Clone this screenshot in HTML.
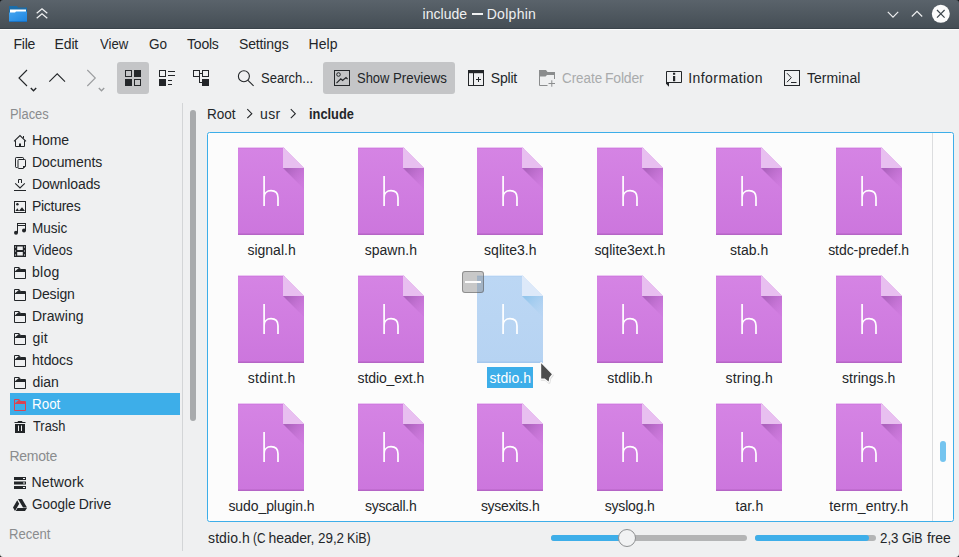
<!DOCTYPE html>
<html><head><meta charset="utf-8"><title>include — Dolphin</title>
<style>
html,body{margin:0;padding:0}
body{width:959px;height:557px;overflow:hidden;background:#eff0f1;position:relative;font-family:"Liberation Sans",sans-serif;font-size:14px}
.abs,.t,.fi,.pi,svg.a{position:absolute}
.t{transform-origin:0 0;white-space:nowrap;line-height:20px;height:20px;font-size:14px}
#title{left:0;top:0;width:959px;height:29px;background:linear-gradient(#5a636b 0,#454e55 96.5%,#3a434a 96.6%)}
#hl{left:0;top:29px;width:959px;height:1px;background:#fcfcfc}
.btn{background:#c4c5c7;border-radius:3px}
#view{left:207px;top:132px;width:745px;height:388px;background:#fcfcfc;border:1px solid #3daee9;border-radius:2.5px}
</style></head><body>
<svg width="0" height="0" style="position:absolute"><defs>
<linearGradient id="bn" x1="0" y1="0" x2="0" y2="1"><stop offset="0" stop-color="#d584e4"/><stop offset="1" stop-color="#cc76dd"/></linearGradient>
<linearGradient id="bs" x1="0" y1="0" x2="0" y2="1"><stop offset="0" stop-color="#bcd7f4"/><stop offset="1" stop-color="#b6d3f2"/></linearGradient>
<linearGradient id="hn" x1="0.25" y1="0" x2="1" y2="0.75"><stop offset="0" stop-color="#ad63be"/><stop offset="1" stop-color="#c873d8" stop-opacity="0.3"/></linearGradient>
<linearGradient id="hs" x1="0.25" y1="0" x2="1" y2="0.75"><stop offset="0" stop-color="#94c6ec"/><stop offset="1" stop-color="#b0d2f2" stop-opacity="0.3"/></linearGradient>
</defs></svg>

<div id="title" class="abs"></div>
<div id="hl" class="abs"></div>
<!-- window corners -->
<svg class="a" style="left:0;top:0" width="3" height="3"><path d="M0 0H3A3 3 0 0 0 0 3Z" fill="#111"/></svg>
<svg class="a" style="left:956px;top:0" width="3" height="3"><path d="M3 0H0A3 3 0 0 1 3 3Z" fill="#111"/></svg>
<svg class="a" style="left:0;top:554px" width="3" height="3"><path d="M0 3H3A3 3 0 0 1 0 0Z" fill="#222"/></svg>
<svg class="a" style="left:956px;top:554px" width="3" height="3"><path d="M3 3H0A3 3 0 0 0 3 0Z" fill="#222"/></svg>

<!-- app icon -->
<svg class="a" style="left:9px;top:6px" width="18" height="16" viewBox="0 0 18 16">
<defs><linearGradient id="fg" x1="0" y1="0" x2="1" y2="1"><stop offset="0" stop-color="#46a5f0"/><stop offset="1" stop-color="#1c84e0"/></linearGradient></defs>
<path d="M0 0H8L9 1.5H18V8H0Z" fill="#1b6ca8"/>
<path d="M1 3.5H17V8H1Z" fill="#fff"/>
<path d="M0 6.5H6L7 5.5H18V16H0Z" fill="url(#fg)"/>
<rect x="0" y="15.3" width="18" height="0.7" fill="#1667b5"/>
</svg>
<div class="abs" style="left:472.3px;top:13.3px;width:10.8px;height:1.4px;background:#eff0f1"></div>
<!-- keep above -->
<svg class="a" style="left:35px;top:7px" width="14" height="14" viewBox="0 0 14 14"><path d="M1.7 6.2L7 1.8L12.3 6.2M1.7 11.2L7 6.8L12.3 11.2" fill="none" stroke="#eff0f1" stroke-width="1.3"/></svg>
<!-- min max close -->
<svg class="a" style="left:885px;top:6px" width="16" height="16" viewBox="0 0 16 16"><path d="M2.8 5.9L8 11.1L13.2 5.9" fill="none" stroke="#eff0f1" stroke-width="1.2"/></svg>
<svg class="a" style="left:909px;top:6px" width="16" height="16" viewBox="0 0 16 16"><path d="M2.8 10.5L8 5.3L13.2 10.5" fill="none" stroke="#eff0f1" stroke-width="1.2"/></svg>
<svg class="a" style="left:931px;top:4px" width="20" height="20" viewBox="0 0 20 20"><circle cx="9.8" cy="9.8" r="9" fill="#fcfcfc"/><path d="M6 6L13.6 13.6M13.6 6L6 13.6" fill="none" stroke="#3b444b" stroke-width="1.2"/></svg>

<!-- toolbar -->
<div class="abs btn" style="left:117px;top:62px;width:32px;height:32px"></div>
<div class="abs btn" style="left:323px;top:62px;width:132px;height:32px"></div>
<svg class="a" style="left:0;top:60px" width="959" height="40" viewBox="0 60 959 40">
<g fill="none" stroke="#232629" stroke-width="1.1">
<path d="M27 70L19 78L27 86"/>
<path d="M30.8 88L33.5 90.7L36.2 88" stroke-width="1.4"/>
<path d="M49.3 81.7L57.2 73.9L65 81.7"/>
<g stroke="#9a9c9e"><path d="M87.3 70L95.3 78L87.3 86"/><path d="M98.8 88L101.5 90.7L104.2 88" stroke-width="1.4"/></g>
</g>
<!-- icons view -->
<g fill="#232629">
<path d="M125 70h7v7h-7z M126 71v5h5v-5z" fill-rule="evenodd"/>
<rect x="134" y="70" width="7" height="7"/>
<rect x="125" y="79" width="7" height="7"/>
<path d="M134 79h7v7h-7z M135 80v5h5v-5z" fill-rule="evenodd"/>
<!-- compact -->
<path d="M159 70h7v7h-7z M160 71v5h5v-5z" fill-rule="evenodd"/>
<rect x="159" y="79" width="7" height="7"/>
<rect x="168" y="71" width="7" height="1"/><rect x="168" y="75" width="7" height="1"/>
<rect x="168" y="80" width="4" height="1"/><rect x="168" y="84" width="4" height="1"/>
<!-- tree -->
<path d="M193 70h7v7h-7z M194 71v5h5v-5z" fill-rule="evenodd"/>
<path d="M202 70h7v7h-7z M203 71v5h5v-5z" fill-rule="evenodd"/>
<rect x="202" y="79" width="7" height="7"/>
<path d="M200 73h2v1h-2z M199 77h1v6h-1z M199 82h3v1h-3z"/>
</g>
<!-- search -->
<g fill="none" stroke="#232629" stroke-width="1.1"><circle cx="243.9" cy="76.2" r="5.5"/><path d="M248 80.3L253.6 85.8"/></g>
<!-- show previews -->
<g fill="none" stroke="#232629"><rect x="334.5" y="70.5" width="15" height="15"/><circle cx="338.5" cy="74.5" r="1.8"/><path d="M336.5 83.2L340.8 78.8L342.6 80.4L346 77.6L347.6 79.2" stroke-width="1.2"/></g>
<!-- split -->
<g fill="none" stroke="#232629"><rect x="468.5" y="70.5" width="15" height="15"/><path d="M473.5 73V85.5"/><path d="M476 79.5H481M478.5 77V82"/></g>
<rect x="468" y="70" width="16" height="3.2" fill="#232629"/>
<!-- create folder -->
<g fill="none" stroke="#8a8c8d"><path d="M547.5 85.5H539.5V72M554.5 79V72"/><path d="M548.5 83.5H555M551.8 80.3V86.7"/></g>
<path d="M539 70H546L547.5 72H555V75H547L545.5 76.5H539Z" fill="#8a8c8d"/>
<!-- information -->
<g fill="none" stroke="#232629"><path d="M666.5 82.5V71.5H681.5V82.5H669"/></g>
<path d="M666 82H669V86.7L666 83.7Z" fill="#232629"/>
<path d="M673 72.8H675.2V74.8H673Z M673 76H675.2V81.2H673Z" fill="#232629"/>
<!-- terminal -->
<g fill="none" stroke="#232629"><rect x="784.5" y="70.5" width="15" height="15"/><path d="M787 73.2L791.3 77.7L787 82.2"/><path d="M791 82.5H796.5"/></g>
</svg>

<!-- places -->
<div class="abs" style="left:10px;top:393px;width:170px;height:22px;background:#3daee9"></div>
<svg class="pi" style="left:12px;top:133.0px;color:#232629" width="16" height="16" viewBox="0 0 16 16"><path d="M2 8.3L8 2.5L14 8.3" fill="none" stroke="currentColor" stroke-width="1.1"/><path d="M3.5 7.3V13.5H12.5V7.3" fill="none" stroke="currentColor"/><rect x="7" y="10.5" width="2" height="3" fill="currentColor"/><path d="M11.5 3V5.2" fill="none" stroke="currentColor"/></svg>
<svg class="pi" style="left:12px;top:155.0px;color:#232629" width="16" height="16" viewBox="0 0 16 16"><path d="M5.5 12.5H4.2C3.8 12.5 3.5 12.2 3.5 11.8V3.2C3.5 2.8 3.8 2.5 4.2 2.5H10.8C11.2 2.5 11.5 2.8 11.5 3.2V4.4" fill="none" stroke="currentColor"/><path d="M6.7 4.5H12.8C13.2 4.5 13.5 4.8 13.5 5.2V11L11 13.5H6.7C6.3 13.5 6 13.2 6 12.8V5.2C6 4.8 6.3 4.5 6.7 4.5Z" fill="none" stroke="currentColor"/><path d="M11 14V11H14Z" fill="currentColor"/></svg>
<svg class="pi" style="left:12px;top:177.0px;color:#232629" width="16" height="16" viewBox="0 0 16 16"><path d="M6.5 6V2.5H9.5V6" fill="none" stroke="currentColor"/><path d="M3.2 6.3L8 11L12.8 6.3" fill="none" stroke="currentColor" stroke-width="1.1"/><path d="M2 13.5H14" fill="none" stroke="currentColor"/></svg>
<svg class="pi" style="left:12px;top:199.0px;color:#232629" width="16" height="16" viewBox="0 0 16 16"><rect x="2.5" y="2.5" width="11" height="11" fill="none" stroke="currentColor"/><circle cx="5.4" cy="5.2" r="1.25" fill="currentColor"/><path d="M3.4 12L5.3 9.3L7 11.7L10 8.3L13 12Z" fill="currentColor"/></svg>
<svg class="pi" style="left:12px;top:221.0px;color:#232629" width="16" height="16" viewBox="0 0 16 16"><path d="M5 2H14V3H5Z M5 4H14V5H5Z M5 2H6V12H5Z M13 2H14V10H13Z" fill="currentColor"/><circle cx="4" cy="11.8" r="2" fill="currentColor"/><circle cx="12" cy="9.6" r="2" fill="currentColor"/></svg>
<svg class="pi" style="left:12px;top:243.0px;color:#232629" width="16" height="16" viewBox="0 0 16 16"><rect x="2" y="2" width="12" height="12" fill="currentColor"/><path d="M5.2 3.5H10.8V7H5.2Z M5.2 9H10.8V12.5H5.2Z" fill="#eff0f1"/><path d="M3 3.5H4V4.5H3Z M3 7.5H4V8.5H3Z M3 11.5H4V12.5H3Z M12 3.5H13V4.5H12Z M12 7.5H13V8.5H12Z M12 11.5H13V12.5H12Z" fill="#eff0f1"/></svg>
<svg class="pi" style="left:12px;top:265.0px;color:#232629" width="16" height="16" viewBox="0 0 16 16"><path d="M2.5 13.5V2.5H7.2L8.5 4.5H13.5V13.5Z" fill="none" stroke="currentColor"/><path d="M3 7V6.2L6.8 3H7.4L8.4 4.5H13V7Z" fill="currentColor"/></svg>
<svg class="pi" style="left:12px;top:287.0px;color:#232629" width="16" height="16" viewBox="0 0 16 16"><path d="M2.5 13.5V2.5H7.2L8.5 4.5H13.5V13.5Z" fill="none" stroke="currentColor"/><path d="M3 7V6.2L6.8 3H7.4L8.4 4.5H13V7Z" fill="currentColor"/></svg>
<svg class="pi" style="left:12px;top:309.0px;color:#232629" width="16" height="16" viewBox="0 0 16 16"><path d="M2.5 13.5V2.5H7.2L8.5 4.5H13.5V13.5Z" fill="none" stroke="currentColor"/><path d="M3 7V6.2L6.8 3H7.4L8.4 4.5H13V7Z" fill="currentColor"/></svg>
<svg class="pi" style="left:12px;top:331.0px;color:#232629" width="16" height="16" viewBox="0 0 16 16"><path d="M2.5 13.5V2.5H7.2L8.5 4.5H13.5V13.5Z" fill="none" stroke="currentColor"/><path d="M3 7V6.2L6.8 3H7.4L8.4 4.5H13V7Z" fill="currentColor"/></svg>
<svg class="pi" style="left:12px;top:353.0px;color:#232629" width="16" height="16" viewBox="0 0 16 16"><path d="M2.5 13.5V2.5H7.2L8.5 4.5H13.5V13.5Z" fill="none" stroke="currentColor"/><path d="M3 7V6.2L6.8 3H7.4L8.4 4.5H13V7Z" fill="currentColor"/></svg>
<svg class="pi" style="left:12px;top:375.0px;color:#232629" width="16" height="16" viewBox="0 0 16 16"><path d="M2.5 13.5V2.5H7.2L8.5 4.5H13.5V13.5Z" fill="none" stroke="currentColor"/><path d="M3 7V6.2L6.8 3H7.4L8.4 4.5H13V7Z" fill="currentColor"/></svg>
<svg class="pi" style="left:12px;top:397.0px;color:#da4453" width="16" height="16" viewBox="0 0 16 16"><path d="M2.5 13.5V2.5H7.2L8.5 4.5H13.5V13.5Z" fill="none" stroke="currentColor"/><path d="M3 7V6.2L6.8 3H7.4L8.4 4.5H13V7Z" fill="currentColor"/></svg>
<svg class="pi" style="left:12px;top:419.0px;color:#232629" width="16" height="16" viewBox="0 0 16 16"><path d="M3 5H13V14H3Z" fill="currentColor"/><path d="M2.5 3.5H13.5" fill="none" stroke="currentColor"/><path d="M6 3V2.5H10V3" fill="none" stroke="currentColor"/><path d="M6 6.5H7V12H6Z M9 6.5H10V12H9Z" fill="#eff0f1"/></svg>
<svg class="pi" style="left:12px;top:475.0px;color:#232629" width="16" height="16" viewBox="0 0 16 16"><path d="M2 2H14V5H2Z M2 6.5H14V9.5H2Z M2 11H14V14H2Z" fill="currentColor"/><path d="M11 3H13V4H11Z M11 7.5H13V8.5H11Z M11 12H13V13H11Z" fill="#eff0f1"/></svg>
<svg class="pi" style="left:12px;top:497.0px;color:#232629" width="16" height="16" viewBox="0 0 16 16"><path d="M6 2H10L15 10.5H11Z M5.2 3.2L7.2 6.8 3 14 1 10.5Z M5.5 11H15L13 14H3.8Z" fill="currentColor"/></svg>
<div class="abs" style="left:190px;top:110px;width:6px;height:311px;border-radius:3px;background:#a8aaac"></div>
<div class="abs" style="left:182px;top:103px;width:1px;height:448px;background:#d3d5d7"></div>

<!-- breadcrumb arrows -->
<svg class="a" style="left:244px;top:106px" width="60" height="16" viewBox="244 106 60 16"><g fill="none" stroke="#232629" stroke-width="1.1"><path d="M247.3 109.2L251.8 113.7L247.3 118.2"/><path d="M290.8 109.2L295.3 113.7L290.8 118.2"/></g></svg>

<!-- view -->
<div id="view" class="abs"></div>
<div class="abs" style="left:932px;top:133px;width:1px;height:388px;background:#dcdddf"></div>
<div class="abs" style="left:940px;top:441px;width:6px;height:21px;border-radius:3px;background:#74c4ef"></div>
<svg class="fi" style="left:238px;top:147px" width="66" height="88" viewBox="0 0 66 88">
<path d="M0 0H45L66 21V88H0Z" fill="url(#bn)"/>
<path d="M0 0H45L46 1H0Z" fill="#ebc7f2"/><path d="M0 1H46L47 2H0Z" fill="#d07be0"/>
<path d="M45 21H66V42Z" fill="url(#hn)"/>
<path d="M45 0L66 21H45Z" fill="#e8bff0"/>
<rect x="0" y="86.5" width="66" height="1.5" fill="#b565c6"/>
<path d="M26.1 29V59M26.1 50.5C26.1 46.3 29 43.7 33 43.7C37.2 43.7 40 46.3 40 50.8V59" fill="none" stroke="#fff" stroke-width="1.7"/>
</svg>
<svg class="fi" style="left:358px;top:147px" width="66" height="88" viewBox="0 0 66 88">
<path d="M0 0H45L66 21V88H0Z" fill="url(#bn)"/>
<path d="M0 0H45L46 1H0Z" fill="#ebc7f2"/><path d="M0 1H46L47 2H0Z" fill="#d07be0"/>
<path d="M45 21H66V42Z" fill="url(#hn)"/>
<path d="M45 0L66 21H45Z" fill="#e8bff0"/>
<rect x="0" y="86.5" width="66" height="1.5" fill="#b565c6"/>
<path d="M26.1 29V59M26.1 50.5C26.1 46.3 29 43.7 33 43.7C37.2 43.7 40 46.3 40 50.8V59" fill="none" stroke="#fff" stroke-width="1.7"/>
</svg>
<svg class="fi" style="left:477px;top:147px" width="66" height="88" viewBox="0 0 66 88">
<path d="M0 0H45L66 21V88H0Z" fill="url(#bn)"/>
<path d="M0 0H45L46 1H0Z" fill="#ebc7f2"/><path d="M0 1H46L47 2H0Z" fill="#d07be0"/>
<path d="M45 21H66V42Z" fill="url(#hn)"/>
<path d="M45 0L66 21H45Z" fill="#e8bff0"/>
<rect x="0" y="86.5" width="66" height="1.5" fill="#b565c6"/>
<path d="M26.1 29V59M26.1 50.5C26.1 46.3 29 43.7 33 43.7C37.2 43.7 40 46.3 40 50.8V59" fill="none" stroke="#fff" stroke-width="1.7"/>
</svg>
<svg class="fi" style="left:597px;top:147px" width="66" height="88" viewBox="0 0 66 88">
<path d="M0 0H45L66 21V88H0Z" fill="url(#bn)"/>
<path d="M0 0H45L46 1H0Z" fill="#ebc7f2"/><path d="M0 1H46L47 2H0Z" fill="#d07be0"/>
<path d="M45 21H66V42Z" fill="url(#hn)"/>
<path d="M45 0L66 21H45Z" fill="#e8bff0"/>
<rect x="0" y="86.5" width="66" height="1.5" fill="#b565c6"/>
<path d="M26.1 29V59M26.1 50.5C26.1 46.3 29 43.7 33 43.7C37.2 43.7 40 46.3 40 50.8V59" fill="none" stroke="#fff" stroke-width="1.7"/>
</svg>
<svg class="fi" style="left:716px;top:147px" width="66" height="88" viewBox="0 0 66 88">
<path d="M0 0H45L66 21V88H0Z" fill="url(#bn)"/>
<path d="M0 0H45L46 1H0Z" fill="#ebc7f2"/><path d="M0 1H46L47 2H0Z" fill="#d07be0"/>
<path d="M45 21H66V42Z" fill="url(#hn)"/>
<path d="M45 0L66 21H45Z" fill="#e8bff0"/>
<rect x="0" y="86.5" width="66" height="1.5" fill="#b565c6"/>
<path d="M26.1 29V59M26.1 50.5C26.1 46.3 29 43.7 33 43.7C37.2 43.7 40 46.3 40 50.8V59" fill="none" stroke="#fff" stroke-width="1.7"/>
</svg>
<svg class="fi" style="left:836px;top:147px" width="66" height="88" viewBox="0 0 66 88">
<path d="M0 0H45L66 21V88H0Z" fill="url(#bn)"/>
<path d="M0 0H45L46 1H0Z" fill="#ebc7f2"/><path d="M0 1H46L47 2H0Z" fill="#d07be0"/>
<path d="M45 21H66V42Z" fill="url(#hn)"/>
<path d="M45 0L66 21H45Z" fill="#e8bff0"/>
<rect x="0" y="86.5" width="66" height="1.5" fill="#b565c6"/>
<path d="M26.1 29V59M26.1 50.5C26.1 46.3 29 43.7 33 43.7C37.2 43.7 40 46.3 40 50.8V59" fill="none" stroke="#fff" stroke-width="1.7"/>
</svg>
<svg class="fi" style="left:238px;top:275px" width="66" height="88" viewBox="0 0 66 88">
<path d="M0 0H45L66 21V88H0Z" fill="url(#bn)"/>
<path d="M0 0H45L46 1H0Z" fill="#ebc7f2"/><path d="M0 1H46L47 2H0Z" fill="#d07be0"/>
<path d="M45 21H66V42Z" fill="url(#hn)"/>
<path d="M45 0L66 21H45Z" fill="#e8bff0"/>
<rect x="0" y="86.5" width="66" height="1.5" fill="#b565c6"/>
<path d="M26.1 29V59M26.1 50.5C26.1 46.3 29 43.7 33 43.7C37.2 43.7 40 46.3 40 50.8V59" fill="none" stroke="#fff" stroke-width="1.7"/>
</svg>
<svg class="fi" style="left:358px;top:275px" width="66" height="88" viewBox="0 0 66 88">
<path d="M0 0H45L66 21V88H0Z" fill="url(#bn)"/>
<path d="M0 0H45L46 1H0Z" fill="#ebc7f2"/><path d="M0 1H46L47 2H0Z" fill="#d07be0"/>
<path d="M45 21H66V42Z" fill="url(#hn)"/>
<path d="M45 0L66 21H45Z" fill="#e8bff0"/>
<rect x="0" y="86.5" width="66" height="1.5" fill="#b565c6"/>
<path d="M26.1 29V59M26.1 50.5C26.1 46.3 29 43.7 33 43.7C37.2 43.7 40 46.3 40 50.8V59" fill="none" stroke="#fff" stroke-width="1.7"/>
</svg>
<svg class="fi" style="left:477px;top:275px" width="66" height="88" viewBox="0 0 66 88">
<path d="M0 0H45L66 21V88H0Z" fill="url(#bs)"/>
<path d="M0 0H45L46 1H0Z" fill="#e3eefb"/><path d="M0 1H46L47 2H0Z" fill="#b4d2f2"/>
<path d="M45 21H66V42Z" fill="url(#hs)"/>
<path d="M45 0L66 21H45Z" fill="#dde9f9"/>
<rect x="0" y="86.5" width="66" height="1.5" fill="#a5c8ee"/>
<path d="M26.1 29V59M26.1 50.5C26.1 46.3 29 43.7 33 43.7C37.2 43.7 40 46.3 40 50.8V59" fill="none" stroke="#fff" stroke-width="1.7"/>
</svg>
<svg class="fi" style="left:597px;top:275px" width="66" height="88" viewBox="0 0 66 88">
<path d="M0 0H45L66 21V88H0Z" fill="url(#bn)"/>
<path d="M0 0H45L46 1H0Z" fill="#ebc7f2"/><path d="M0 1H46L47 2H0Z" fill="#d07be0"/>
<path d="M45 21H66V42Z" fill="url(#hn)"/>
<path d="M45 0L66 21H45Z" fill="#e8bff0"/>
<rect x="0" y="86.5" width="66" height="1.5" fill="#b565c6"/>
<path d="M26.1 29V59M26.1 50.5C26.1 46.3 29 43.7 33 43.7C37.2 43.7 40 46.3 40 50.8V59" fill="none" stroke="#fff" stroke-width="1.7"/>
</svg>
<svg class="fi" style="left:716px;top:275px" width="66" height="88" viewBox="0 0 66 88">
<path d="M0 0H45L66 21V88H0Z" fill="url(#bn)"/>
<path d="M0 0H45L46 1H0Z" fill="#ebc7f2"/><path d="M0 1H46L47 2H0Z" fill="#d07be0"/>
<path d="M45 21H66V42Z" fill="url(#hn)"/>
<path d="M45 0L66 21H45Z" fill="#e8bff0"/>
<rect x="0" y="86.5" width="66" height="1.5" fill="#b565c6"/>
<path d="M26.1 29V59M26.1 50.5C26.1 46.3 29 43.7 33 43.7C37.2 43.7 40 46.3 40 50.8V59" fill="none" stroke="#fff" stroke-width="1.7"/>
</svg>
<svg class="fi" style="left:836px;top:275px" width="66" height="88" viewBox="0 0 66 88">
<path d="M0 0H45L66 21V88H0Z" fill="url(#bn)"/>
<path d="M0 0H45L46 1H0Z" fill="#ebc7f2"/><path d="M0 1H46L47 2H0Z" fill="#d07be0"/>
<path d="M45 21H66V42Z" fill="url(#hn)"/>
<path d="M45 0L66 21H45Z" fill="#e8bff0"/>
<rect x="0" y="86.5" width="66" height="1.5" fill="#b565c6"/>
<path d="M26.1 29V59M26.1 50.5C26.1 46.3 29 43.7 33 43.7C37.2 43.7 40 46.3 40 50.8V59" fill="none" stroke="#fff" stroke-width="1.7"/>
</svg>
<svg class="fi" style="left:238px;top:403px" width="66" height="88" viewBox="0 0 66 88">
<path d="M0 0H45L66 21V88H0Z" fill="url(#bn)"/>
<path d="M0 0H45L46 1H0Z" fill="#ebc7f2"/><path d="M0 1H46L47 2H0Z" fill="#d07be0"/>
<path d="M45 21H66V42Z" fill="url(#hn)"/>
<path d="M45 0L66 21H45Z" fill="#e8bff0"/>
<rect x="0" y="86.5" width="66" height="1.5" fill="#b565c6"/>
<path d="M26.1 29V59M26.1 50.5C26.1 46.3 29 43.7 33 43.7C37.2 43.7 40 46.3 40 50.8V59" fill="none" stroke="#fff" stroke-width="1.7"/>
</svg>
<svg class="fi" style="left:358px;top:403px" width="66" height="88" viewBox="0 0 66 88">
<path d="M0 0H45L66 21V88H0Z" fill="url(#bn)"/>
<path d="M0 0H45L46 1H0Z" fill="#ebc7f2"/><path d="M0 1H46L47 2H0Z" fill="#d07be0"/>
<path d="M45 21H66V42Z" fill="url(#hn)"/>
<path d="M45 0L66 21H45Z" fill="#e8bff0"/>
<rect x="0" y="86.5" width="66" height="1.5" fill="#b565c6"/>
<path d="M26.1 29V59M26.1 50.5C26.1 46.3 29 43.7 33 43.7C37.2 43.7 40 46.3 40 50.8V59" fill="none" stroke="#fff" stroke-width="1.7"/>
</svg>
<svg class="fi" style="left:477px;top:403px" width="66" height="88" viewBox="0 0 66 88">
<path d="M0 0H45L66 21V88H0Z" fill="url(#bn)"/>
<path d="M0 0H45L46 1H0Z" fill="#ebc7f2"/><path d="M0 1H46L47 2H0Z" fill="#d07be0"/>
<path d="M45 21H66V42Z" fill="url(#hn)"/>
<path d="M45 0L66 21H45Z" fill="#e8bff0"/>
<rect x="0" y="86.5" width="66" height="1.5" fill="#b565c6"/>
<path d="M26.1 29V59M26.1 50.5C26.1 46.3 29 43.7 33 43.7C37.2 43.7 40 46.3 40 50.8V59" fill="none" stroke="#fff" stroke-width="1.7"/>
</svg>
<svg class="fi" style="left:597px;top:403px" width="66" height="88" viewBox="0 0 66 88">
<path d="M0 0H45L66 21V88H0Z" fill="url(#bn)"/>
<path d="M0 0H45L46 1H0Z" fill="#ebc7f2"/><path d="M0 1H46L47 2H0Z" fill="#d07be0"/>
<path d="M45 21H66V42Z" fill="url(#hn)"/>
<path d="M45 0L66 21H45Z" fill="#e8bff0"/>
<rect x="0" y="86.5" width="66" height="1.5" fill="#b565c6"/>
<path d="M26.1 29V59M26.1 50.5C26.1 46.3 29 43.7 33 43.7C37.2 43.7 40 46.3 40 50.8V59" fill="none" stroke="#fff" stroke-width="1.7"/>
</svg>
<svg class="fi" style="left:716px;top:403px" width="66" height="88" viewBox="0 0 66 88">
<path d="M0 0H45L66 21V88H0Z" fill="url(#bn)"/>
<path d="M0 0H45L46 1H0Z" fill="#ebc7f2"/><path d="M0 1H46L47 2H0Z" fill="#d07be0"/>
<path d="M45 21H66V42Z" fill="url(#hn)"/>
<path d="M45 0L66 21H45Z" fill="#e8bff0"/>
<rect x="0" y="86.5" width="66" height="1.5" fill="#b565c6"/>
<path d="M26.1 29V59M26.1 50.5C26.1 46.3 29 43.7 33 43.7C37.2 43.7 40 46.3 40 50.8V59" fill="none" stroke="#fff" stroke-width="1.7"/>
</svg>
<svg class="fi" style="left:836px;top:403px" width="66" height="88" viewBox="0 0 66 88">
<path d="M0 0H45L66 21V88H0Z" fill="url(#bn)"/>
<path d="M0 0H45L46 1H0Z" fill="#ebc7f2"/><path d="M0 1H46L47 2H0Z" fill="#d07be0"/>
<path d="M45 21H66V42Z" fill="url(#hn)"/>
<path d="M45 0L66 21H45Z" fill="#e8bff0"/>
<rect x="0" y="86.5" width="66" height="1.5" fill="#b565c6"/>
<path d="M26.1 29V59M26.1 50.5C26.1 46.3 29 43.7 33 43.7C37.2 43.7 40 46.3 40 50.8V59" fill="none" stroke="#fff" stroke-width="1.7"/>
</svg>
<!-- selection label -->
<div class="abs" style="left:487px;top:367px;width:46px;height:21px;background:#3daee9"></div>
<!-- selection toggle -->
<div class="abs" style="left:462px;top:271px;width:20px;height:20px;border:1px solid rgba(70,70,70,.45);border-radius:3px;background:rgba(128,128,128,.42)"></div>
<div class="abs" style="left:465px;top:281px;width:16px;height:2px;background:#fcfcfc"></div>
<!-- cursor -->
<svg class="a" style="left:536px;top:358px" width="22" height="28" viewBox="536 358 22 28"><path d="M541.2 363.3L551.9 374.3L549.3 377.5L548.6 381.6L544.8 378.6H541.2Z" fill="#000" opacity=".12" transform="translate(0.6,1)" stroke="#000" stroke-width="2.4" stroke-linejoin="round"/><path d="M541.2 363.3L551.9 374.3L549.3 377.5L548.6 381.6L544.8 378.6H541.2Z" fill="#4d4d4d" stroke="#fcfcfc" stroke-width="2.4" stroke-linejoin="round" paint-order="stroke"/></svg>

<!-- status -->
<div class="abs" style="left:551px;top:535px;width:196px;height:6px;border-radius:3px;background:#b3b4b5"></div>
<div class="abs" style="left:551px;top:535px;width:80px;height:6px;border-radius:3px;background:#3daee9"></div>
<div class="abs" style="left:618px;top:529px;width:16px;height:16px;border-radius:50%;border:1px solid #8e9092;background:#f1f2f3"></div>
<div class="abs" style="left:755px;top:535px;width:121px;height:6px;border-radius:3px;background:#b3b4b5"></div>
<div class="abs" style="left:755px;top:535px;width:114px;height:6px;border-radius:3px;background:#3daee9"></div>

<span class="t" style="left:422.62px;top:4.45px;color:#eff0f1;letter-spacing:0.030px;">include</span>
<span class="t" style="left:486.71px;top:4.45px;color:#eff0f1;letter-spacing:0.284px;">Dolphin</span>
<span class="t" style="left:13.51px;top:34.45px;color:#232629;letter-spacing:-0.266px;">File</span>
<span class="t" style="left:54.61px;top:34.45px;color:#232629;letter-spacing:-0.159px;">Edit</span>
<span class="t" style="left:99.80px;top:34.45px;color:#232629;letter-spacing:0.000px;transform:scaleX(0.9384);">View</span>
<span class="t" style="left:148.96px;top:34.45px;color:#232629;letter-spacing:0.000px;transform:scaleX(0.9684);">Go</span>
<span class="t" style="left:187.08px;top:34.45px;color:#232629;letter-spacing:-0.232px;">Tools</span>
<span class="t" style="left:238.96px;top:34.45px;color:#232629;letter-spacing:-0.130px;">Settings</span>
<span class="t" style="left:308.41px;top:34.45px;color:#232629;letter-spacing:0.123px;">Help</span>
<span class="t" style="left:260.99px;top:68.45px;color:#232629;letter-spacing:0.000px;transform:scaleX(0.9314);">Search...</span>
<span class="t" style="left:356.89px;top:68.45px;color:#232629;letter-spacing:0.000px;transform:scaleX(0.9265);">Show</span>
<span class="t" style="left:392.86px;top:68.45px;color:#232629;letter-spacing:0.000px;transform:scaleX(0.9482);">Previews</span>
<span class="t" style="left:490.76px;top:68.45px;color:#232629;letter-spacing:-0.186px;">Split</span>
<span class="t" style="left:561.77px;top:68.45px;color:#a9abac;letter-spacing:0.000px;transform:scaleX(0.9560);">Create</span>
<span class="t" style="left:604.91px;top:68.45px;color:#a9abac;letter-spacing:-0.164px;">Folder</span>
<span class="t" style="left:688.21px;top:68.45px;color:#232629;letter-spacing:0.435px;">Information</span>
<span class="t" style="left:806.88px;top:68.45px;color:#232629;letter-spacing:0.091px;">Terminal</span>
<span class="t" style="left:9.69px;top:104.45px;color:#8a8c8e;letter-spacing:0.000px;transform:scaleX(0.9212);">Places</span>
<span class="t" style="left:207.34px;top:104.45px;color:#232629;letter-spacing:0.000px;transform:scaleX(0.9675);">Root</span>
<span class="t" style="left:260.12px;top:104.45px;color:#232629;letter-spacing:0.248px;">usr</span>
<span class="t" style="left:309.20px;top:104.45px;color:#232629;letter-spacing:0.000px;transform:scaleX(0.9145);font-weight:700;">include</span>
<span class="t" style="left:9.41px;top:446.45px;color:#8a8c8e;letter-spacing:-0.232px;">Remote</span>
<span class="t" style="left:31.61px;top:472.45px;color:#232629;letter-spacing:0.138px;">Network</span>
<span class="t" style="left:31.87px;top:494.45px;color:#232629;letter-spacing:0.000px;transform:scaleX(0.9654);">Google</span>
<span class="t" style="left:78.81px;top:494.45px;color:#232629;letter-spacing:-0.052px;">Drive</span>
<span class="t" style="left:9.48px;top:524.45px;color:#8a8c8e;letter-spacing:0.000px;transform:scaleX(0.9351);">Recent</span>
<span class="t" style="left:208.08px;top:528.45px;color:#232629;letter-spacing:0.076px;">stdio.h</span>
<span class="t" style="left:252.55px;top:528.45px;color:#232629;letter-spacing:0.000px;transform:scaleX(0.8437);">(C</span>
<span class="t" style="left:268.62px;top:528.45px;color:#232629;letter-spacing:-0.148px;">header,</span>
<span class="t" style="left:317.67px;top:528.45px;color:#232629;letter-spacing:0.000px;transform:scaleX(0.9568);">29,2</span>
<span class="t" style="left:347.12px;top:528.45px;color:#232629;letter-spacing:0.000px;transform:scaleX(0.8973);">KiB)</span>
<span class="t" style="left:879.88px;top:528.45px;color:#232629;letter-spacing:0.000px;transform:scaleX(0.9486);">2,3</span>
<span class="t" style="left:901.82px;top:528.45px;color:#232629;letter-spacing:0.000px;transform:scaleX(0.8826);">GiB</span>
<span class="t" style="left:926.90px;top:528.45px;color:#232629;letter-spacing:-0.086px;">free</span>
<span class="t" style="left:31.91px;top:130.45px;color:#232629;letter-spacing:-0.061px;">Home</span>
<span class="t" style="left:31.91px;top:152.45px;color:#232629;letter-spacing:-0.059px;">Documents</span>
<span class="t" style="left:31.91px;top:174.45px;color:#232629;letter-spacing:-0.104px;">Downloads</span>
<span class="t" style="left:31.91px;top:196.45px;color:#232629;letter-spacing:-0.263px;">Pictures</span>
<span class="t" style="left:31.94px;top:218.45px;color:#232629;letter-spacing:0.000px;transform:scaleX(0.9646);">Music</span>
<span class="t" style="left:33.00px;top:240.45px;color:#232629;letter-spacing:0.000px;transform:scaleX(0.9308);">Videos</span>
<span class="t" style="left:32.12px;top:262.45px;color:#232629;letter-spacing:0.197px;">blog</span>
<span class="t" style="left:31.91px;top:284.45px;color:#232629;letter-spacing:-0.120px;">Design</span>
<span class="t" style="left:31.91px;top:306.45px;color:#232629;letter-spacing:0.038px;">Drawing</span>
<span class="t" style="left:32.56px;top:328.45px;color:#232629;letter-spacing:0.152px;">git</span>
<span class="t" style="left:32.12px;top:350.45px;color:#232629;letter-spacing:-0.067px;">htdocs</span>
<span class="t" style="left:32.56px;top:372.45px;color:#232629;letter-spacing:-0.082px;">dian</span>
<span class="t" style="left:31.95px;top:394.45px;color:#ffffff;letter-spacing:0.000px;transform:scaleX(0.9570);">Root</span>
<span class="t" style="left:32.80px;top:416.45px;color:#232629;letter-spacing:0.000px;transform:scaleX(0.9165);">Trash</span>
<span class="t" style="left:247.38px;top:240.45px;color:#232629;letter-spacing:0.007px;">signal.h</span>
<span class="t" style="left:364.68px;top:240.45px;color:#232629;letter-spacing:0.043px;">spawn.h</span>
<span class="t" style="left:484.03px;top:240.45px;color:#232629;letter-spacing:0.045px;">sqlite3.h</span>
<span class="t" style="left:594.38px;top:240.45px;color:#232629;letter-spacing:-0.001px;">sqlite3ext.h</span>
<span class="t" style="left:730.08px;top:240.45px;color:#232629;letter-spacing:0.013px;">stab.h</span>
<span class="t" style="left:828.18px;top:240.45px;color:#232629;letter-spacing:-0.067px;">stdc-predef.h</span>
<span class="t" style="left:247.73px;top:368.45px;color:#232629;letter-spacing:0.352px;">stdint.h</span>
<span class="t" style="left:357.53px;top:368.45px;color:#232629;letter-spacing:-0.101px;">stdio_ext.h</span>
<span class="t" style="left:489.53px;top:368.45px;color:#ffffff;letter-spacing:0.043px;">stdio.h</span>
<span class="t" style="left:607.13px;top:368.45px;color:#232629;letter-spacing:0.135px;">stdlib.h</span>
<span class="t" style="left:725.58px;top:368.45px;color:#232629;letter-spacing:0.185px;">string.h</span>
<span class="t" style="left:841.88px;top:368.45px;color:#232629;letter-spacing:0.074px;">strings.h</span>
<span class="t" style="left:228.43px;top:496.45px;color:#232629;letter-spacing:-0.082px;">sudo_plugin.h</span>
<span class="t" style="left:365.08px;top:496.45px;color:#232629;letter-spacing:-0.260px;">syscall.h</span>
<span class="t" style="left:480.88px;top:496.45px;color:#232629;letter-spacing:-0.295px;">sysexits.h</span>
<span class="t" style="left:604.68px;top:496.45px;color:#232629;letter-spacing:-0.165px;">syslog.h</span>
<span class="t" style="left:735.40px;top:496.45px;color:#232629;letter-spacing:0.136px;">tar.h</span>
<span class="t" style="left:829.30px;top:496.45px;color:#232629;letter-spacing:0.122px;">term_entry.h</span>
</body></html>
